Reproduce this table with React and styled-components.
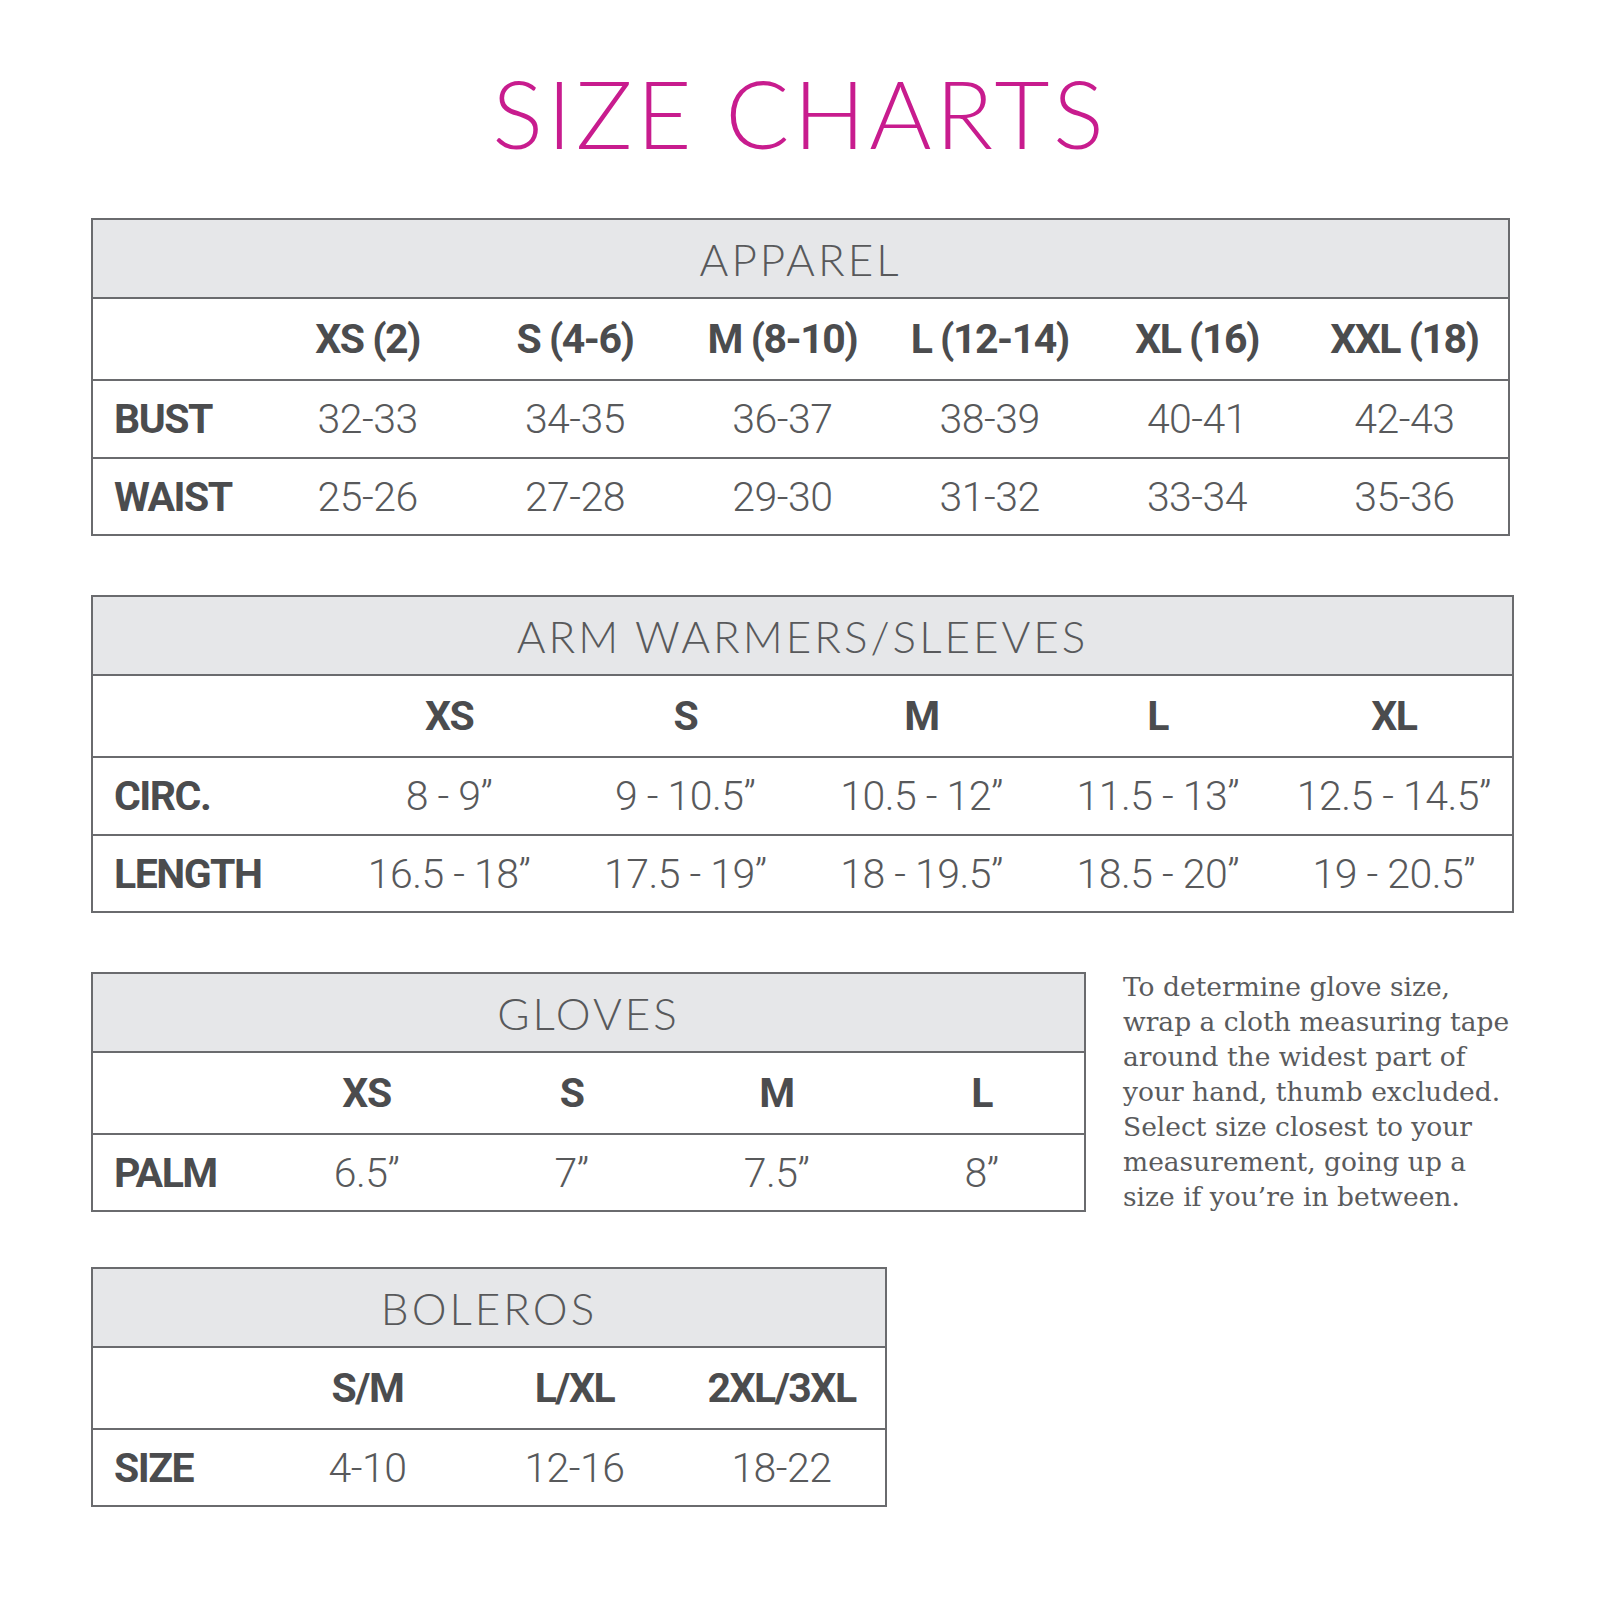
import styled, {createGlobalStyle} from 'styled-components';

const GlobalStyle = createGlobalStyle`
    body {
        margin: 0;
        background: #ffffff;
        font-family: 'Roboto', 'Liberation Sans', sans-serif;
        color: #555557;
    }
`;

const Page = styled.div`
    width: 1600px;
    height: 1600px;
    box-sizing: border-box;
    padding: 57px 0 0 91px;
`;

const Title = styled.h1`
    margin: 0 0 51px -91px;
    text-align: center;
    font-family: 'Lato', 'Liberation Sans', sans-serif;
    font-weight: 300;
    font-size: 95px;
    line-height: 110px;
    letter-spacing: 4px;
    color: #c81c8e;
`;

const Stack = styled.div`
    display: flex;
    flex-direction: column;
`;

const Section = styled.div`
    display: flex;
    align-items: flex-start;
    gap: 37px;
    margin-bottom: ${props => props.$gap || 59}px;
`;

const Table = styled.div`
    width: ${props => props.$width}px;
    border: 2px solid #6a6b6e;
    display: grid;
    grid-template-columns: ${props => props.$label}px repeat(${props => props.$cols}, 1fr);
    box-sizing: border-box;
`;

const Header = styled.div`
    grid-column: 1 / -1;
    height: 77px;
    background: #e6e7e9;
    border-bottom: 2px solid #6a6b6e;
    display: flex;
    align-items: center;
    justify-content: center;
    font-family: 'Lato', 'Liberation Sans', sans-serif;
    font-weight: 300;
    font-size: 44px;
    letter-spacing: 3px;
    color: #58595b;
`;

const Cell = styled.div`
    height: ${props => props.$h}px;
    display: flex;
    align-items: center;
    justify-content: ${props => props.$left ? 'flex-start' : 'center'};
    padding-left: ${props => props.$left ? 21 : 0}px;
    border-bottom: ${props => props.$last ? 'none' : '2px solid #6a6b6e'};
    font-size: 41px;
    font-weight: ${props => props.$bold ? 700 : 300};
    letter-spacing: ${props => props.$bold ? '-1.5px' : '-0.5px'};
    color: ${props => props.$bold ? '#4b4c4e' : '#58595b'};
    white-space: nowrap;
`;

const Note = styled.p`
    margin: -3px 0 0;
    font-family: 'DejaVu Serif', 'Liberation Serif', serif;
    font-size: 26.5px;
    line-height: 35px;
    color: #5a5b5d;
    white-space: nowrap;
`;

const NoteLine = styled.span`
    display: block;
`;

const charts = [
    {
        title: 'APPAREL',
        width: 1419,
        label: 171,
        sizes: ['XS (2)', 'S (4-6)', 'M (8-10)', 'L (12-14)', 'XL (16)', 'XXL (18)'],
        rows: [
            ['BUST', '32-33', '34-35', '36-37', '38-39', '40-41', '42-43'],
            ['WAIST', '25-26', '27-28', '29-30', '31-32', '33-34', '35-36'],
        ],
    },
    {
        title: 'ARM WARMERS/SLEEVES',
        width: 1423,
        label: 238,
        sizes: ['XS', 'S', 'M', 'L', 'XL'],
        rows: [
            ['CIRC.', '8 - 9”', '9 - 10.5”', '10.5 - 12”', '11.5 - 13”', '12.5 - 14.5”'],
            ['LENGTH', '16.5 - 18”', '17.5 - 19”', '18 - 19.5”', '18.5 - 20”', '19 - 20.5”'],
        ],
    },
    {
        title: 'GLOVES',
        width: 995,
        label: 171,
        sizes: ['XS', 'S', 'M', 'L'],
        rows: [
            ['PALM', '6.5”', '7”', '7.5”', '8”'],
        ],
        note: [
            'To determine glove size,',
            'wrap a cloth measuring tape',
            'around the widest part of',
            'your hand, thumb excluded.',
            'Select size closest to your',
            'measurement, going up a',
            'size if you’re in between.',
        ],
        gap: 53,
    },
    {
        title: 'BOLEROS',
        width: 796,
        label: 171,
        sizes: ['S/M', 'L/XL', '2XL/3XL'],
        rows: [
            ['SIZE', '4-10', '12-16', '18-22'],
        ],
    },
];

const SizeTable = ({chart}) => (
    <Table $width={chart.width} $label={chart.label} $cols={chart.sizes.length}>
        <Header>{chart.title}</Header>
        <Cell $h={80} />
        {chart.sizes.map(size => (
            <Cell key={size} $h={80} $bold>{size}</Cell>
        ))}
        {chart.rows.map((row, r) => {
            const last = r === chart.rows.length - 1;
            return row.map((value, i) => (
                <Cell
                    key={`${r}-${i}`}
                    $h={last ? 75 : 76}
                    $left={i === 0}
                    $bold={i === 0}
                    $last={last}
                >
                    {value}
                </Cell>
            ));
        })}
    </Table>
);

const App = () => {
    return (
        <Page>
            <GlobalStyle />
            <Title>SIZE CHARTS</Title>
            <Stack>
                {charts.map(chart => (
                    <Section key={chart.title} $gap={chart.gap}>
                        <SizeTable chart={chart} />
                        {chart.note && (
                            <Note>
                                {chart.note.map(line => (
                                    <NoteLine key={line}>{line}</NoteLine>
                                ))}
                            </Note>
                        )}
                    </Section>
                ))}
            </Stack>
        </Page>
    );
};

export default App;
